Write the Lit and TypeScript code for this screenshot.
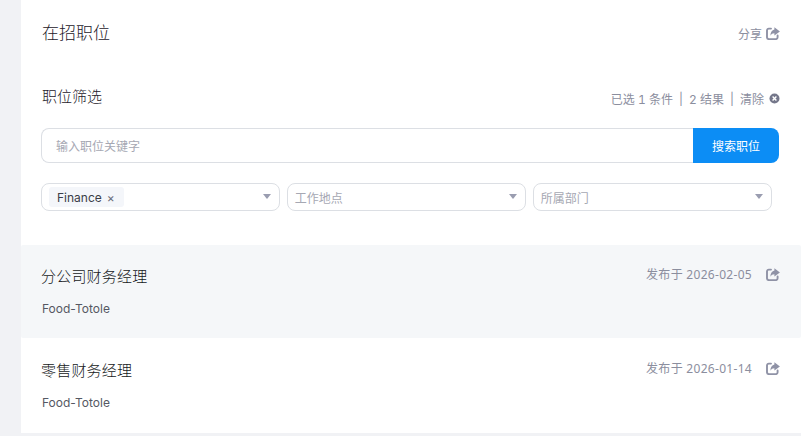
import { LitElement, html, css } from "lit";
import { customElement } from "lit/decorators.js";

const shareIcon = html`<svg class="share" viewBox="0 0 14 13" aria-hidden="true">
  <path d="M5 1.6H2.8A1.8 1.8 0 0 0 1 3.4v7A1.8 1.8 0 0 0 2.8 12.1h7a1.8 1.8 0 0 0 1.8-1.8V8.4" fill="none" stroke="currentColor" stroke-width="1.9" stroke-linecap="round"/>
  <path d="M8.4 0.2 13.9 4.4 8.4 8.6V6.2C6.6 6.2 5.2 6.9 4.4 8.8 4.4 5.2 6 3 8.4 2.6Z" fill="currentColor"/>
</svg>`;

@customElement("app-root")
export class AppRoot extends LitElement {
  static styles = css`
    :host {
      display: block;
      height: 436px;
      overflow: hidden;
      background: #f1f2f5;
      font-family: Inter, "Noto Sans CJK SC", sans-serif;
      color: #333640;
    }
    .card {
      margin-left: 21px;
      height: 433px;
      display: flex;
      flex-direction: column;
      background: #fff;
    }
    .top {
      height: 245px;
      padding: 0 21px 0 20px;
      box-sizing: border-box;
      flex: none;
    }
    .head {
      height: 65px;
      display: flex;
      align-items: center;
      justify-content: space-between;
    }
    h1 {
      margin: -3px 0 0 1px;
      font-size: 17px;
      font-weight: 300;
      color: #1d2029;
    }
    .muted {
      display: flex;
      align-items: center;
      font-size: 12px;
      color: #8b8e9e;
    }
    .share {
      width: 14px;
      height: 13px;
      color: #8f92a6;
      flex: none;
    }
    .shareTop {
      gap: 4px;
      padding-top: 2px;
    }
    .filterHead {
      height: 26px;
      margin-top: 19px;
      display: flex;
      align-items: center;
      justify-content: space-between;
    }
    h2 {
      margin: -4px 0 0 1px;
      font-size: 15px;
      font-weight: 300;
      color: #1d2029;
    }
    .sum {
      gap: 6px;
      padding-top: 3px;
      font-variant-numeric: tabular-nums;
    }
    .x {
      width: 11px;
      height: 11px;
      margin-left: -1px;
    }
    .search {
      margin-top: 18px;
      margin-right: 1px;
      height: 35px;
      display: flex;
    }
    .kw {
      flex: 1;
      display: flex;
      align-items: center;
      box-sizing: border-box;
      padding-left: 14px;
      border: 1px solid #dcdfe4;
      border-right: none;
      border-radius: 8px 0 0 8px;
      font-size: 12px;
      color: #a6a8b3;
    }
    .btn {
      width: 86px;
      display: flex;
      align-items: center;
      justify-content: center;
      background: #0c8df5;
      color: #fff;
      font-size: 12px;
      border-radius: 0 8px 8px 0;
    }
    .selects {
      margin-top: 20px;
      width: 731px;
      display: grid;
      grid-template-columns: repeat(3, 1fr);
      gap: 6.5px;
    }
    .sel {
      height: 28px;
      box-sizing: border-box;
      border: 1px solid #dcdfe4;
      border-radius: 8px;
      display: flex;
      align-items: center;
      padding: 0 8px 0 7px;
      font-size: 12px;
      color: #a6a8b3;
    }
    .sel span.ph {
      flex: 1;
    }
    .tag {
      display: flex;
      align-items: center;
      height: 20px;
      padding: 0 9px 0 8px;
      gap: 5px;
      background: #f4f6fa;
      border-radius: 3px;
      color: #3a3d48;
      font-size: 12px;
      margin-right: auto;
    }
    .tag i {
      font-style: normal;
      font-size: 12px;
      color: #6a6d7a;
    }
    .caret {
      width: 0;
      height: 0;
      margin-top: -1px;
      border-left: 4px solid transparent;
      border-right: 4px solid transparent;
      border-top: 5px solid #9a9db0;
    }
    .row {
      height: 93px;
      flex: none;
      box-sizing: border-box;
      padding: 19px 21px 0 20px;
    }
    .row.alt {
      background: #f5f7f9;
      border-radius: 2px;
    }
    .row + .row {
      margin-top: 1px;
    }
    .line {
      display: flex;
      align-items: center;
      justify-content: space-between;
      height: 22px;
    }
    h3 {
      margin: 0;
      font-size: 15px;
      letter-spacing: 0.2px;
      font-weight: 300;
      color: #151821;
    }
    .meta {
      gap: 14px;
      margin-top: -2px;
    }
    .date {
      font-family: "Noto Sans", "Noto Sans CJK SC", sans-serif;
      font-size: 12px;
      letter-spacing: 0.3px;
    }
    .co {
      margin: 15px 0 0 1px;
      font-size: 12px;
      color: #555863;
    }
  `;

  private job(title: string, date: string, alt: boolean) {
    return html`<div class="row ${alt ? "alt" : ""}">
      <div class="line">
        <h3>${title}</h3>
        <div class="muted meta"><span class="date">发布于 ${date}</span>${shareIcon}</div>
      </div>
      <div class="co">Food-Totole</div>
    </div>`;
  }

  render() {
    return html`<div class="card">
      <div class="top">
        <div class="head">
          <h1>在招职位</h1>
          <div class="muted shareTop"><span>分享</span>${shareIcon}</div>
        </div>
        <div class="filterHead">
          <h2>职位筛选</h2>
          <div class="muted sum">
            <span>已选 1 条件</span><span>|</span><span>2 结果</span><span>|</span><span>清除</span>
            <svg class="x" viewBox="0 0 11 11" aria-hidden="true">
              <circle cx="5.5" cy="5.5" r="5" fill="#74778a"/>
              <path d="M3.6 3.6 7.4 7.4M7.4 3.6 3.6 7.4" stroke="#fff" stroke-width="1.4"/>
            </svg>
          </div>
        </div>
        <div class="search">
          <div class="kw">输入职位关键字</div>
          <div class="btn">搜索职位</div>
        </div>
        <div class="selects">
          <div class="sel"><div class="tag">Finance <i>×</i></div><div class="caret"></div></div>
          <div class="sel"><span class="ph">工作地点</span><div class="caret"></div></div>
          <div class="sel"><span class="ph">所属部门</span><div class="caret"></div></div>
        </div>
      </div>
      ${this.job("分公司财务经理", "2026-02-05", true)}
      ${this.job("零售财务经理", "2026-01-14", false)}
    </div>`;
  }
}
